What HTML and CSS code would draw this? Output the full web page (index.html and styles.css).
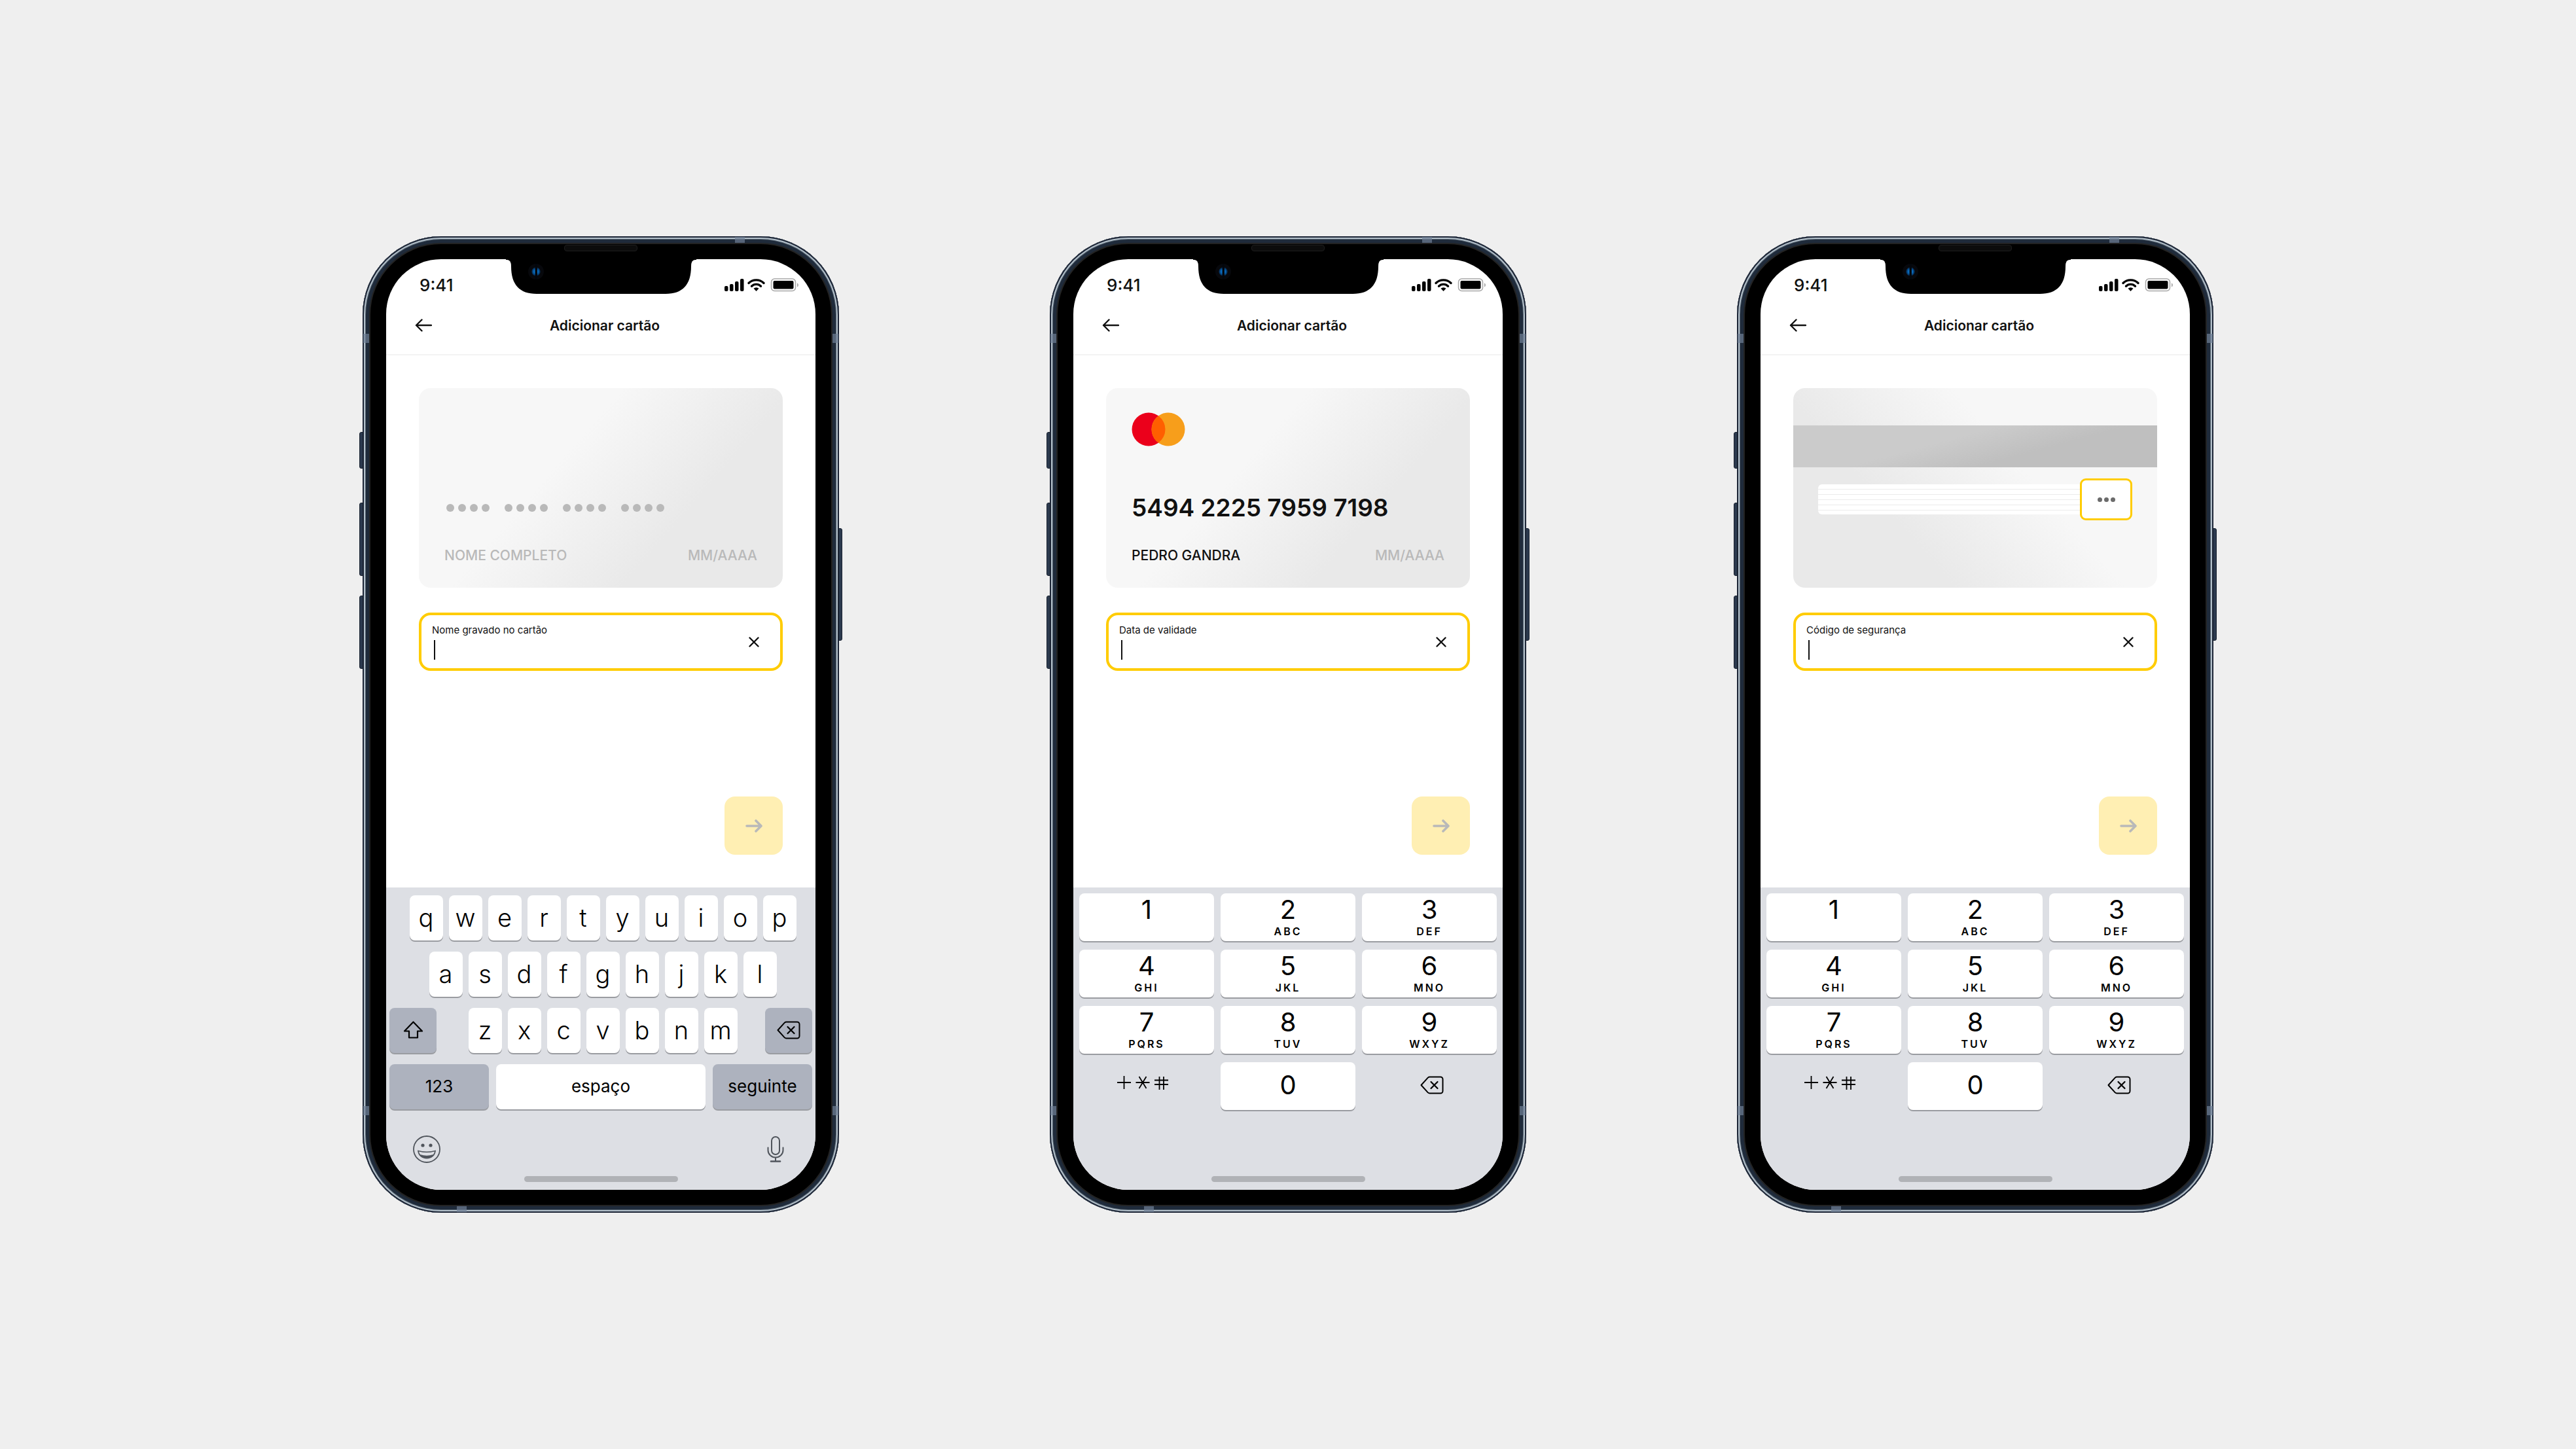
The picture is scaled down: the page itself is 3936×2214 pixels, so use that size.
FILE: index.html
```
<!DOCTYPE html>
<html lang="pt">
<head>
  <meta charset="UTF-8">
  <meta name="viewport" content="width=device-width, initial-scale=1">
  <title>Adicionar cartão</title>
  <link rel="stylesheet" href="styles.css">
</head>
<body>

  <!-- shared icons -->
  <svg class="defs" aria-hidden="true">
    <symbol id="status" viewBox="0 0 115 21">
      <rect x="1" y="12" width="5.500" height="8" rx="2"/>
      <rect x="9" y="9" width="5.500" height="11" rx="2"/>
      <rect x="17" y="5" width="5.500" height="15" rx="2"/>
      <rect x="25" y="1" width="5.500" height="19" rx="2"/>
      <path d="M38 7.500a16.500 16.500 0 0 1 23 0M42.500 12.200a10 10 0 0 1 14 0" fill="none" stroke="#000" stroke-width="3.400" stroke-linecap="round"/>
      <path d="M49.500 20l-4-4.200a6 6 0 0 1 8 0z"/>
      <rect x="72.500" y="1" width="37" height="18.500" rx="5" fill="#fff" stroke="#a6a6a6" stroke-width="1.500"/>
      <rect x="75.500" y="4" width="31" height="12.500" rx="2"/>
      <path d="M112 7.500c2.500 1 2.500 5 0 6z" fill="#a6a6a6"/>
    </symbol>
    <symbol id="back" viewBox="0 0 26 20">
      <path d="M25 10H2M10.500 1.500L2 10l8.500 8.500" fill="none" stroke="currentColor" stroke-width="2.400" stroke-linecap="round" stroke-linejoin="round"/>
    </symbol>
    <symbol id="next" viewBox="0 0 26 20">
      <path d="M2 10h22M16 2l8 8-8 8" fill="none" stroke="currentColor" stroke-width="3.600" stroke-linecap="round" stroke-linejoin="round"/>
    </symbol>
    <symbol id="clear" viewBox="0 0 16 16">
      <path d="M1.500 1.500l13 13M14.500 1.500l-13 13" stroke="currentColor" stroke-width="2.400" stroke-linecap="round"/>
    </symbol>
    <symbol id="delete" viewBox="0 0 36 28">
      <path d="M14.500 1.500H31a3.500 3.500 0 0 1 3.500 3.500v18a3.500 3.500 0 0 1-3.500 3.500H14.500a4 4 0 0 1-2.700-1.100L1.500 14 11.800 2.600a4 4 0 0 1 2.700-1.100z" fill="none" stroke="currentColor" stroke-width="2" stroke-linejoin="round"/>
      <path d="M16.500 9l10 10M26.500 9l-10 10" stroke="currentColor" stroke-width="2.200" stroke-linecap="round"/>
    </symbol>
    <symbol id="shift" viewBox="0 0 31 27">
      <path d="M15.500 1.500L29 15.500h-7V25.500H9V15.500H2z" fill="none" stroke="currentColor" stroke-width="2.200" stroke-linejoin="round"/>
    </symbol>
    <symbol id="symbols" viewBox="0 0 78 22">
      <path d="M0 11h21M10.500 1v20M28.500 11h21M33.500 2l11 18M44.500 2l-11 18M57 7.500h21M57 14h21M64.500 2v20M71 2v20" fill="none" stroke="currentColor" stroke-width="1.800"/>
    </symbol>
    <symbol id="emoji" viewBox="0 0 42 42">
      <circle cx="21" cy="21" r="20" fill="none" stroke="currentColor" stroke-width="1.800"/>
      <circle cx="15" cy="15" r="2.600"/>
      <circle cx="27" cy="15" r="2.600"/>
      <path d="M7 22.500q14 4 28 0c-.5 8-6.500 13-14 13s-13.500-5-14-13z"/>
      <path d="M9 24.500q12 3 24 0-.5 2.500-2 4.500-10 3.500-20 0-1.500-2-2-4.500z" fill="#dddfe4"/>
    </symbol>
    <symbol id="mic" viewBox="0 0 26 40">
      <g fill="none" stroke="currentColor" stroke-width="2" stroke-linecap="round">
        <rect x="7" y="1" width="12" height="27" rx="6"/>
        <path d="M1.500 17.500v4a11.500 11 0 0 0 23 0v-4M13 32.500V38"/>
        <path d="M6 38.500h14" stroke-width="2.600"/>
      </g>
    </symbol>
    <symbol id="notch" viewBox="0 0 291 53">
      <path d="M0 0h291v1h-2q-6 0-6 10c0 28-13 42-39 42H47C21 53 8 39 8 11Q8 1 2 1H0z"/>
    </symbol>
    <symbol id="mastercard" viewBox="0 0 82 52">
      <circle cx="26" cy="26" r="25.500" fill="#eb001b"/>
      <circle cx="56" cy="26" r="25.500" fill="#f79e1b"/>
      <path d="M41 5.400a25.500 25.500 0 0 1 0 41.200a25.500 25.500 0 0 1 0-41.200z" fill="#ff5f00"/>
    </symbol>
  </svg>

  <main class="phones">

    <!-- name -->
    <section class="phone">
      <i class="side mute"></i><i class="side vol-up"></i><i class="side vol-down"></i><i class="side power"></i>
      <i class="band band-top"></i><i class="band band-bottom"></i><i class="band band-sides upper"></i><i class="band band-sides lower"></i>
      <i class="speaker"></i>
      <div class="screen">
        <svg class="notch"><use href="#notch"/></svg>
        <i class="camera"></i>
        <div class="status"><span>9:41</span><svg class="status-icons"><use href="#status"/></svg></div>
        <header class="nav">
          <button class="plain" aria-label="Voltar"><svg class="arrow"><use href="#back"/></svg></button>
          <h1>Adicionar cartão</h1>
        </header>
        <div class="content">
          <div class="card">
            <div class="dots">
              <span><i></i><i></i><i></i><i></i></span>
              <span><i></i><i></i><i></i><i></i></span>
              <span><i></i><i></i><i></i><i></i></span>
              <span><i></i><i></i><i></i><i></i></span>
            </div>
            <div class="card-row empty"><span>NOME COMPLETO</span><span>MM/AAAA</span></div>
          </div>
          <div class="field">
            <div class="field-text">
              <label for="name">Nome gravado no cartão</label>
              <input id="name" type="text">
            </div>
            <button class="plain" aria-label="Limpar"><svg class="clear"><use href="#clear"/></svg></button>
          </div>
          <button class="next" aria-label="Continuar"><svg class="arrow"><use href="#next"/></svg></button>
        </div>
        <div class="keyboard letters">
          <div class="keys shifted">
            <button>q</button><button>w</button><button>e</button><button>r</button><button>t</button><button>y</button><button>u</button><button>i</button><button>o</button><button>p</button>
          </div>
          <div class="keys shifted">
            <button>a</button><button>s</button><button>d</button><button>f</button><button>g</button><button>h</button><button>j</button><button>k</button><button>l</button>
          </div>
          <div class="keys spread">
            <button class="dark" aria-label="Maiúsculas"><svg class="shift"><use href="#shift"/></svg></button>
            <div class="keys shifted">
              <button>z</button><button>x</button><button>c</button><button>v</button><button>b</button><button>n</button><button>m</button>
            </div>
            <button class="dark" aria-label="Apagar"><svg class="delete"><use href="#delete"/></svg></button>
          </div>
          <div class="keys words">
            <button class="dark">123</button>
            <button class="space">espaço</button>
            <button class="dark">seguinte</button>
          </div>
          <div class="tools">
            <button class="plain" aria-label="Emoji"><svg class="emoji"><use href="#emoji"/></svg></button>
            <button class="plain" aria-label="Ditado"><svg class="mic"><use href="#mic"/></svg></button>
          </div>
          <div class="home"></div>
        </div>
      </div>
    </section>

    <!-- expiry date -->
    <section class="phone">
      <i class="side mute"></i><i class="side vol-up"></i><i class="side vol-down"></i><i class="side power"></i>
      <i class="band band-top"></i><i class="band band-bottom"></i><i class="band band-sides upper"></i><i class="band band-sides lower"></i>
      <i class="speaker"></i>
      <div class="screen">
        <svg class="notch"><use href="#notch"/></svg>
        <i class="camera"></i>
        <div class="status"><span>9:41</span><svg class="status-icons"><use href="#status"/></svg></div>
        <header class="nav">
          <button class="plain" aria-label="Voltar"><svg class="arrow"><use href="#back"/></svg></button>
          <h1>Adicionar cartão</h1>
        </header>
        <div class="content">
          <div class="card">
            <svg class="brand"><use href="#mastercard"/></svg>
            <div class="number">5494 2225 7959 7198</div>
            <div class="card-row"><span>PEDRO GANDRA</span><span class="empty">MM/AAAA</span></div>
          </div>
          <div class="field">
            <div class="field-text">
              <label for="date">Data de validade</label>
              <input id="date" type="text">
            </div>
            <button class="plain" aria-label="Limpar"><svg class="clear"><use href="#clear"/></svg></button>
          </div>
          <button class="next" aria-label="Continuar"><svg class="arrow"><use href="#next"/></svg></button>
        </div>
        <div class="keyboard numbers">
          <div class="pad">
            <button>1<small></small></button>
            <button>2<small>ABC</small></button>
            <button>3<small>DEF</small></button>
            <button>4<small>GHI</small></button>
            <button>5<small>JKL</small></button>
            <button>6<small>MNO</small></button>
            <button>7<small>PQRS</small></button>
            <button>8<small>TUV</small></button>
            <button>9<small>WXYZ</small></button>
            <button class="plain more" aria-label="Símbolos"><svg class="symbols"><use href="#symbols"/></svg></button>
            <button class="zero">0</button>
            <button class="plain erase" aria-label="Apagar"><svg class="delete"><use href="#delete"/></svg></button>
          </div>
          <div class="home"></div>
        </div>
      </div>
    </section>

    <!-- security code -->
    <section class="phone">
      <i class="side mute"></i><i class="side vol-up"></i><i class="side vol-down"></i><i class="side power"></i>
      <i class="band band-top"></i><i class="band band-bottom"></i><i class="band band-sides upper"></i><i class="band band-sides lower"></i>
      <i class="speaker"></i>
      <div class="screen">
        <svg class="notch"><use href="#notch"/></svg>
        <i class="camera"></i>
        <div class="status"><span>9:41</span><svg class="status-icons"><use href="#status"/></svg></div>
        <header class="nav">
          <button class="plain" aria-label="Voltar"><svg class="arrow"><use href="#back"/></svg></button>
          <h1>Adicionar cartão</h1>
        </header>
        <div class="content">
          <div class="card card-back">
            <div class="stripe"></div>
            <div class="signature">
              <div class="lines"></div>
              <div class="code"><i></i><i></i><i></i></div>
            </div>
          </div>
          <div class="field">
            <div class="field-text">
              <label for="code">Código de segurança</label>
              <input id="code" type="text">
            </div>
            <button class="plain" aria-label="Limpar"><svg class="clear"><use href="#clear"/></svg></button>
          </div>
          <button class="next" aria-label="Continuar"><svg class="arrow"><use href="#next"/></svg></button>
        </div>
        <div class="keyboard numbers">
          <div class="pad">
            <button>1<small></small></button>
            <button>2<small>ABC</small></button>
            <button>3<small>DEF</small></button>
            <button>4<small>GHI</small></button>
            <button>5<small>JKL</small></button>
            <button>6<small>MNO</small></button>
            <button>7<small>PQRS</small></button>
            <button>8<small>TUV</small></button>
            <button>9<small>WXYZ</small></button>
            <button class="plain more" aria-label="Símbolos"><svg class="symbols"><use href="#symbols"/></svg></button>
            <button class="zero">0</button>
            <button class="plain erase" aria-label="Apagar"><svg class="delete"><use href="#delete"/></svg></button>
          </div>
          <div class="home"></div>
        </div>
      </div>
    </section>

  </main>

</body>
</html>
```
FILE: styles.css
```
* { box-sizing: border-box; }
body { margin: 0; min-height: 100vh; display: flex; background: #efefef; font-family: Inter, sans-serif; color: #111; }
button { font: inherit; color: inherit; border: 0; padding: 0; }
svg { display: block; }
.defs { position: absolute; width: 0; height: 0; }

.phones { margin: auto; flex: 1; display: grid; grid-template-columns: repeat(3, minmax(0, 728px)); justify-content: center; gap: 322px; }

/* device */
.phone {
  position: relative;
  padding: 35px 36px;
  border-radius: 120px;
  background: #000;
  box-shadow: inset 0 0 0 2px #1c2536, inset 0 0 0 4px #b3c0ca, inset 0 0 0 5px #5b6875, inset 0 0 0 10px #1f2b3b, inset 0 0 0 12px #232323;
}
.side { position: absolute; left: -5px; width: 6px; background: #2c3a4e; border: 1px solid #18212f; border-radius: 3px 0 0 3px; }
.mute { top: 299px; height: 56px; }
.vol-up { top: 407px; height: 112px; }
.vol-down { top: 549px; height: 112px; }
.power { left: auto; right: -5px; top: 446px; height: 172px; border-radius: 0 3px 3px 0; }
.band { position: absolute; background: #6f7f96; opacity: .7; }
.band-top { top: 1px; right: 144px; width: 15px; height: 9px; }
.band-bottom { bottom: 1px; left: 144px; width: 15px; height: 9px; }
.band-sides { left: 1px; right: 1px; height: 14px; background: linear-gradient(#6f7f96, #6f7f96) left / 9px 100% no-repeat, linear-gradient(#6f7f96, #6f7f96) right / 9px 100% no-repeat; }
.upper { top: 149px; }
.lower { bottom: 149px; }
.speaker { position: absolute; top: 13px; left: 50%; width: 112px; height: 10px; margin-left: -56px; border-radius: 4px; background: #0c0c0c; border: 1px solid #1d1d1d; }

.screen { position: relative; display: flex; flex-direction: column; aspect-ratio: 656 / 1422; border-radius: 84px; overflow: hidden; background: #fff; }
.notch { position: absolute; top: 0; left: 50%; width: 291px; height: 53px; margin-left: -145px; }
.camera { position: absolute; top: 7px; left: 50%; width: 24px; height: 24px; margin-left: -111px; border-radius: 50%; background: linear-gradient(90deg, transparent 42%, #02060c 46% 56%, transparent 60%), radial-gradient(circle, #0a6fc4 3px, #04305c 6px, transparent 7px), #07080c; }

.status { height: 78px; padding: 0 25px 0 51px; display: flex; align-items: center; justify-content: space-between; font-size: 26px; font-weight: 500; }
.status-icons { width: 115px; height: 21px; }
.nav { height: 69px; padding: 0 36px 21px 44px; display: grid; grid-template-columns: 26px 1fr 26px; align-items: center; border-bottom: 2px solid #f3f3f3; }
.nav h1 { margin: 0; padding-left: 4px; font-size: 21px; font-weight: 600; text-align: center; }
.plain { background: none; }
.arrow { width: 26px; height: 20px; }

.content { flex: 1; display: flex; flex-direction: column; padding: 50px; }

/* card */
.card { height: 305px; padding: 37px 39px 35px; display: flex; flex-direction: column; border-radius: 18px; background: linear-gradient(131deg, #f7f7f7 38%, #e9e9e9 70%); }
.brand { width: 82px; height: 52px; }
.number { margin-top: auto; font-size: 37px; line-height: 46px; font-weight: 600; }
.dots { margin-top: auto; padding: 0 3px; height: 46px; display: flex; align-items: center; gap: 23px; }
.dots span { display: flex; gap: 6px; }
.dots i { width: 12px; height: 12px; border-radius: 50%; background: #b9b9b9; }
.card-row { margin-top: 36px; display: flex; justify-content: space-between; font-size: 21px; line-height: 28px; font-weight: 500; }
.empty { color: #b9b9b9; }

.card-back { padding: 57px 0 0; background: linear-gradient(229deg, #f7f7f7 38%, #e9e9e9 70%); }
.stripe { height: 64px; background: linear-gradient(165deg, #cbcbcb 40%, #bfbfbf 65%); }
.signature { margin: 17px 38px 0; display: flex; align-items: center; }
.lines { flex: 1; height: 46px; border-radius: 6px 0 0 6px; background: repeating-linear-gradient(#fff 0 7px, #ebebeb 7px 8px); }
.code { width: 80px; height: 64px; display: flex; align-items: center; justify-content: center; gap: 3px; background: #fff; border: 3px solid #fc0; border-radius: 9px; }
.code i { width: 7px; height: 7px; border-radius: 50%; background: #6b6b6b; }

/* field */
.field { margin-top: 38px; height: 89px; padding: 0 32px 0 16px; display: flex; align-items: center; justify-content: space-between; border: 4px solid #fc0; border-radius: 18px; }
.field-text { flex: 1; display: flex; flex-direction: column; }
.field label { font-size: 15px; line-height: 20px; }
.field input { height: 30px; margin: 5px 0 0 3px; padding: 0; border: 0; border-left: 2px solid #111; outline: 0; background: none; font: inherit; font-size: 22px; }
.clear { width: 16px; height: 16px; }
.next { align-self: flex-end; margin-top: auto; width: 89px; height: 89px; display: grid; place-items: center; border-radius: 16px; background: #ffefb3; color: #b9b9b9; }

/* keyboards */
.keyboard { height: 462px; display: flex; flex-direction: column; background: #dddfe4; color: #000; }
.letters { padding: 12px 5px; gap: 17px; }
.keys { display: flex; justify-content: center; gap: 9px; }
.keys button { width: 51px; height: 69px; padding-bottom: 2px; display: grid; place-items: center; border-radius: 8px; background: #fff; box-shadow: 0 2px 0 #9a9ca1; font-size: 38px; font-weight: 300; }
.shifted { padding-left: 6px; }
.spread { justify-content: space-between; }
.keys .dark { width: 72px; background: #adb2be; }
.words { justify-content: space-between; gap: 11px; }
.words button { font-size: 26px; font-weight: 400; }
.words .dark { width: 152px; }
.words .space { flex: 1; }
.shift { width: 31px; height: 27px; }
.delete { width: 36px; height: 28px; }
.tools { display: flex; justify-content: space-between; align-items: center; padding: 23px 43px 0 36px; color: #50555c; fill: #50555c; }
.emoji { width: 42px; height: 42px; }
.mic { width: 26px; height: 40px; }
.home { width: 235px; height: 9px; margin: auto auto 0; border-radius: 5px; background: #b0b2b6; }

.numbers { padding: 9px 9px 12px; }
.pad { display: grid; grid-template-columns: repeat(3, 1fr); grid-auto-rows: 73px; gap: 13px 10px; }
.pad button { padding-bottom: 4px; display: flex; flex-direction: column; align-items: center; justify-content: center; font-size: 40px; line-height: 46px; }
.pad button:not(.plain) { border-radius: 8px; background: #fff; box-shadow: 0 2px 0 #9a9ca1; }
.pad small { height: 20px; font-size: 16px; line-height: 20px; font-weight: 600; letter-spacing: 3px; }
.pad .more { padding: 0 12px 12px 0; }
.pad .erase { padding: 0 0 4px 8px; }
.symbols { width: 78px; height: 22px; }
```
